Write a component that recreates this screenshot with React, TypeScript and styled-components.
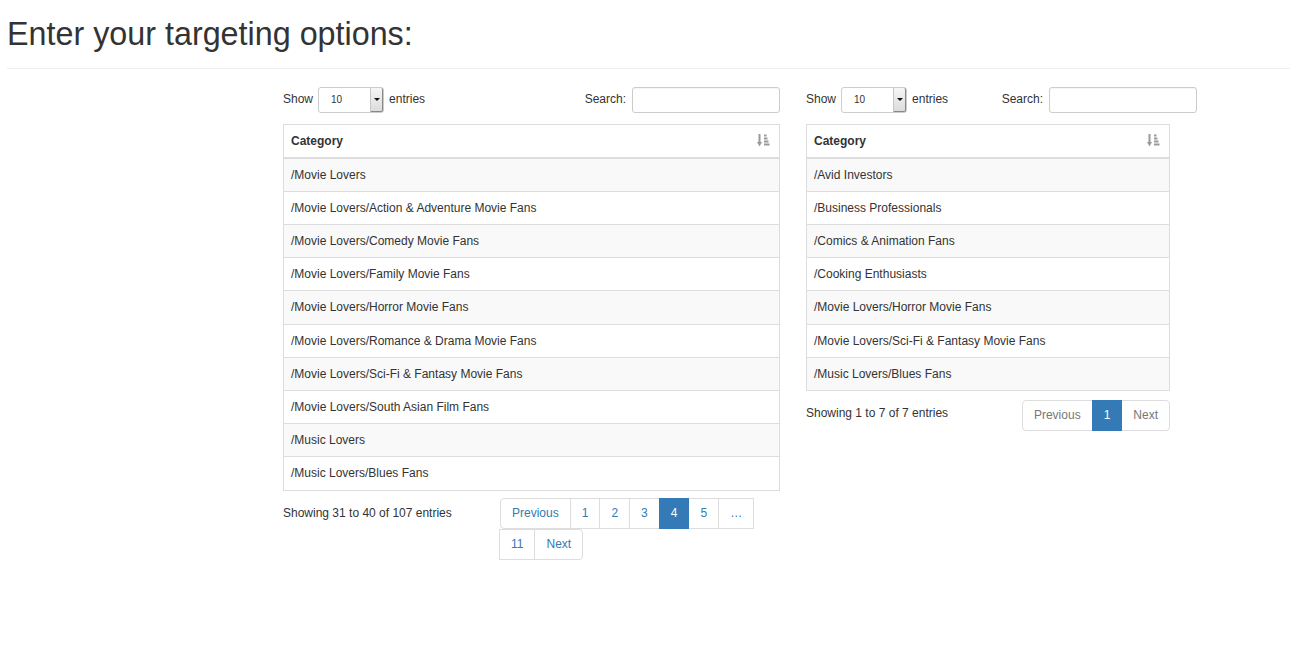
import styled, { createGlobalStyle, css } from "styled-components";

const GlobalStyle = createGlobalStyle`
  html, body {
    margin: 0;
    padding: 0;
    background: #fff;
  }
  body {
    font-family: "Liberation Sans", Arial, sans-serif;
    font-size: 12px;
    line-height: 1.42857;
    color: #333;
  }
  * {
    box-sizing: border-box;
  }
`;

const Page = styled.div`
  padding-left: 7px;
`;

const Title = styled.h1`
  margin: 17px 0 0;
  font-size: 32.3px;
  font-weight: 400;
  line-height: 1.1;
  color: #333;
`;

const Rule = styled.hr`
  margin: 15px 0 0;
  border: 0;
  border-top: 1px solid #eee;
`;

const Tables = styled.div`
  display: flex;
  align-items: flex-start;
  gap: 26px;
  padding: 18px 0 0 276px;
`;

const Wrapper = styled.div<{ $width: number }>`
  width: ${(p) => p.$width}px;
`;

const FilterRow = styled.div`
  display: flex;
  justify-content: space-between;
  align-items: center;
  height: 27px;
`;

const Label = styled.label`
  display: flex;
  align-items: center;
  gap: 4px;
`;

const SelectBox = styled.span`
  position: relative;
  display: inline-flex;
  align-items: center;
  width: 66px;
  height: 26px;
  margin: 0 1px;
  padding-left: 12px;
  border: 1px solid #ccc;
  border-radius: 3px;
  font-size: 10px;
  color: #333;
  background: #fff;
`;

const SelectArrow = styled.span`
  position: absolute;
  top: 0;
  right: 0;
  bottom: 0;
  width: 13px;
  border-left: 1px solid #c6c6c6;
  border-bottom: 1px solid #888;
  border-right: 1px solid #888;
  border-radius: 0 2px 2px 0;
  background: linear-gradient(#f6f6f6, #dcdcdc);
  &::after {
    content: "";
    position: absolute;
    left: 3px;
    top: 10px;
    border-left: 3px solid transparent;
    border-right: 3px solid transparent;
    border-top: 3px solid #111;
  }
`;

const SearchInput = styled.input`
  width: 148px;
  height: 26px;
  margin-left: 2px;
  padding: 0 6px;
  border: 1px solid #ccc;
  border-radius: 3px;
  font: inherit;
  box-shadow: inset 0 1px 1px rgba(0, 0, 0, 0.04);
`;

const Table = styled.div<{ $width: number }>`
  width: ${(p) => p.$width}px;
  margin-top: 10px;
  border: 1px solid #ddd;
`;

const HeadCell = styled.div`
  display: flex;
  justify-content: space-between;
  align-items: center;
  padding: 8px 9px 8px 7px;
  line-height: 16px;
  font-weight: 700;
  border-bottom: 2px solid #ddd;
`;

const Row = styled.div<{ $striped: boolean }>`
  padding: 8px 7px;
  line-height: 16.2px;
  background: ${(p) => (p.$striped ? "#f9f9f9" : "#fff")};
  & + & {
    border-top: 1px solid #ddd;
  }
`;

const BottomRow = styled.div<{ $width: number }>`
  display: flex;
  align-items: flex-start;
  width: ${(p) => p.$width}px;
`;

const Info = styled.div<{ $width?: number }>`
  flex: ${(p) => (p.$width ? `0 0 ${p.$width}px` : "1 1 auto")};
  padding-top: 14px;
`;

const PagerCol = styled.div<{ $offset: number }>`
  flex: 1 1 auto;
  text-align: right;
  padding-top: ${(p) => p.$offset}px;
`;

const Pager = styled.ul`
  display: inline-flex;
  flex-wrap: wrap;
  max-width: 100%;
  margin: 0;
  padding: 0;
  list-style: none;
  text-align: left;
`;

const PageItem = styled.li<{ $active?: boolean; $disabled?: boolean }>`
  margin-left: -1px;
  padding: 6px 11px;
  line-height: 17px;
  border: 1px solid #ddd;
  color: #337ab7;
  background: #fff;
  cursor: pointer;
  &:first-child {
    margin-left: 0;
    border-radius: 4px 0 0 4px;
  }
  &:last-child {
    border-radius: 0 4px 4px 0;
  }
  ${(p) =>
    p.$disabled &&
    css`
      color: #777;
      cursor: not-allowed;
    `}
  ${(p) =>
    p.$active &&
    css`
      position: relative;
      z-index: 2;
      color: #fff;
      background: #337ab7;
      border-color: #337ab7;
    `}
`;

function SortIcon() {
  return (
    <svg width="13" height="13" viewBox="0 0 13 13" fill="#9a9a9a">
      <rect x="1.5" y="0" width="2" height="8.5" />
      <polygon points="0,8 5,8 2.5,12.5" />
      <rect x="7" y="0.5" width="2.5" height="2" />
      <rect x="7" y="3.5" width="3.5" height="2" />
      <rect x="7" y="6.5" width="4.5" height="2" />
      <rect x="7" y="9.5" width="5.5" height="2" />
    </svg>
  );
}

interface IPage {
  label: string;
  active?: boolean;
  disabled?: boolean;
}

interface IPanel {
  width: number;
  tableWidth: number;
  rows: string[];
  info: string;
  infoWidth?: number;
  pages: IPage[];
  pagerOffset: number;
}

function DataPanel({ width, tableWidth, rows, info, infoWidth, pages, pagerOffset }: IPanel) {
  return (
    <Wrapper $width={width}>
      <FilterRow>
        <Label>
          Show
          <SelectBox>
            10
            <SelectArrow />
          </SelectBox>
          entries
        </Label>
        <Label>
          Search:
          <SearchInput type="search" />
        </Label>
      </FilterRow>
      <Table $width={tableWidth}>
        <HeadCell>
          Category
          <SortIcon />
        </HeadCell>
        {rows.map((row, i) => (
          <Row key={row} $striped={i % 2 === 0}>
            {row}
          </Row>
        ))}
      </Table>
      <BottomRow $width={tableWidth}>
        <Info $width={infoWidth}>{info}</Info>
        <PagerCol $offset={pagerOffset}>
          <Pager>
            {pages.map((page) => (
              <PageItem key={page.label} $active={page.active} $disabled={page.disabled}>
                {page.label}
              </PageItem>
            ))}
          </Pager>
        </PagerCol>
      </BottomRow>
    </Wrapper>
  );
}

const leftRows = [
  "/Movie Lovers",
  "/Movie Lovers/Action & Adventure Movie Fans",
  "/Movie Lovers/Comedy Movie Fans",
  "/Movie Lovers/Family Movie Fans",
  "/Movie Lovers/Horror Movie Fans",
  "/Movie Lovers/Romance & Drama Movie Fans",
  "/Movie Lovers/Sci-Fi & Fantasy Movie Fans",
  "/Movie Lovers/South Asian Film Fans",
  "/Music Lovers",
  "/Music Lovers/Blues Fans",
];

const rightRows = [
  "/Avid Investors",
  "/Business Professionals",
  "/Comics & Animation Fans",
  "/Cooking Enthusiasts",
  "/Movie Lovers/Horror Movie Fans",
  "/Movie Lovers/Sci-Fi & Fantasy Movie Fans",
  "/Music Lovers/Blues Fans",
];

const leftPages: IPage[] = [
  { label: "Previous" },
  { label: "1" },
  { label: "2" },
  { label: "3" },
  { label: "4", active: true },
  { label: "5" },
  { label: "…" },
  { label: "11" },
  { label: "Next" },
];

const rightPages: IPage[] = [
  { label: "Previous", disabled: true },
  { label: "1", active: true },
  { label: "Next", disabled: true },
];

export default function App() {
  return (
    <Page>
      <GlobalStyle />
      <Title>Enter your targeting options:</Title>
      <Rule />
      <Tables>
        <DataPanel
          width={497}
          tableWidth={497}
          rows={leftRows}
          info="Showing 31 to 40 of 107 entries"
          infoWidth={217}
          pages={leftPages}
          pagerOffset={7}
        />
        <DataPanel
          width={391}
          tableWidth={364}
          rows={rightRows}
          info="Showing 1 to 7 of 7 entries"
          pages={rightPages}
          pagerOffset={9}
        />
      </Tables>
    </Page>
  );
}
